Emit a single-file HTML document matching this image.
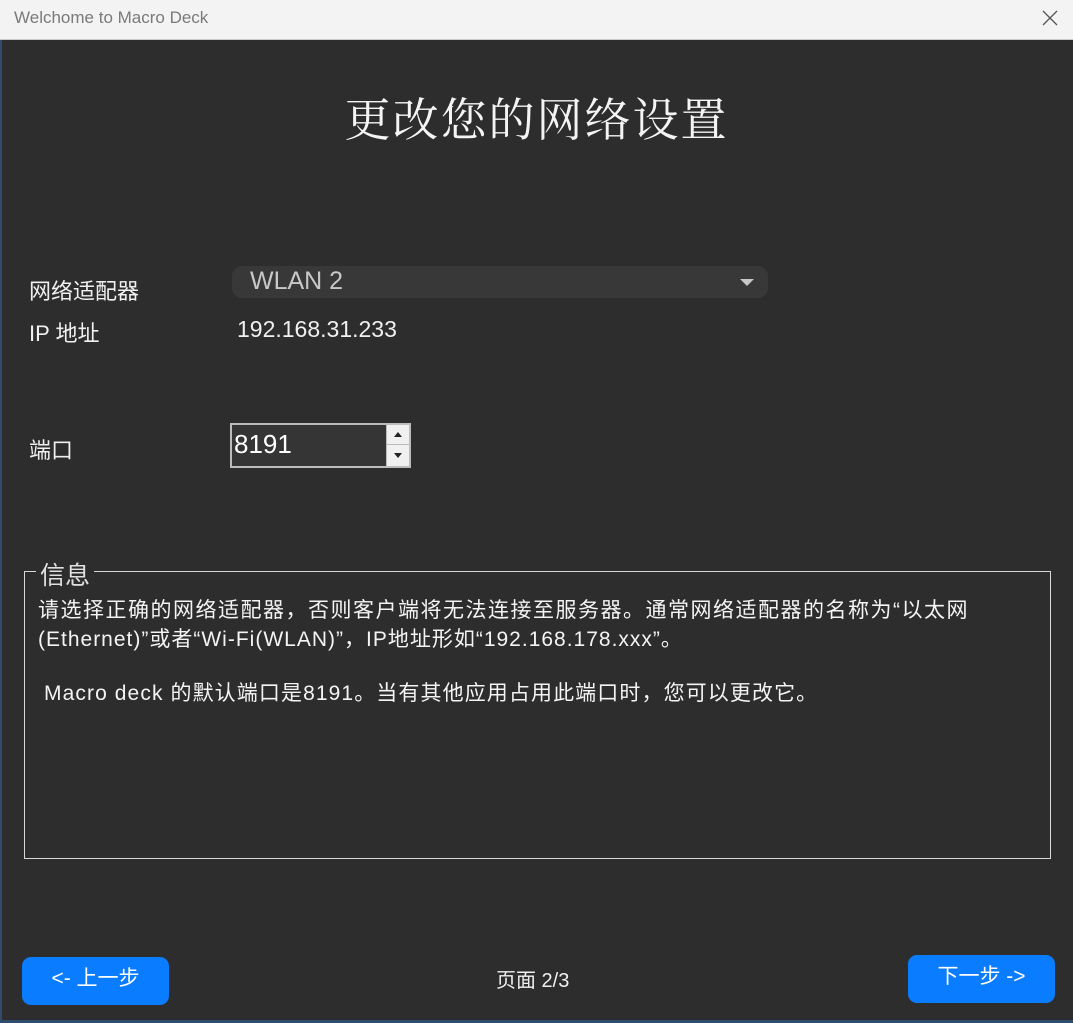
<!DOCTYPE html>
<html><head><meta charset="utf-8"><style>
*{margin:0;padding:0;box-sizing:border-box}
body{width:1073px;height:1023px;background:#2d2d2d;font-family:"Liberation Sans","Noto Sans CJK SC",sans-serif;color:#f0f0f0;position:relative;overflow:hidden}
.tb{position:absolute;left:0;top:0;width:1073px;height:40px;background:#f3f3f3;border-bottom:1px solid #ccc}
.tb span{position:absolute;left:14px;top:8px;font-size:17px;color:#7a7a7a}
.edge{position:absolute;left:0;top:40px;width:2px;height:983px;background:#2f4c6e}
.edgeb{position:absolute;left:0;top:1020px;width:1073px;height:3px;background:#2f4c6e}
.abs{position:absolute;white-space:nowrap}
.h{left:0;width:1073px;text-align:center;top:84px;font-size:46px;font-family:"Noto Serif CJK SC",serif;letter-spacing:2px;color:#f4f4f4}
.lbl{font-size:22px;color:#f0f0f0}
.combo{left:232px;top:266px;width:536px;height:32px;border-radius:10px;background:#383838}
.combo span{position:absolute;left:18px;top:1px;font-size:25px;color:#c8c8c8}
.arr{position:absolute;right:14px;top:13px;width:0;height:0;border-left:7px solid transparent;border-right:7px solid transparent;border-top:7px solid #c8c8c8}
.spin{left:230px;top:423px;width:181px;height:45px;border:2px solid #bcbcbc;background:#353535}
.spin span{position:absolute;left:2px;top:4px;font-size:26px;color:#fff}
.btns{position:absolute;right:0;top:0;width:23px;height:41px;background:#f0f0f0;border-left:1px solid #bbb}
.btns div{height:20px;border-bottom:1px solid #bbb;position:relative}
.fs{left:24px;top:571px;width:1027px;height:288px;border:1.5px solid #d8d8d8}
.leg{left:36px;top:556px;font-size:25px;background:#2d2d2d;padding:0 4px;color:#e0e0e0}
.p{left:38px;font-size:21px;letter-spacing:1.5px;color:#f4f4f4}
.btn{top:957px;width:147px;height:48px;background:#0a7cff;border-radius:9px;font-size:21px;color:#fff;text-align:center;line-height:44px}
</style></head><body>
<div class="tb"><span>Welchome to Macro Deck</span>
<svg style="position:absolute;right:14px;top:9px" width="18" height="18" viewBox="0 0 18 18"><path d="M2 2L16 16M16 2L2 16" stroke="#555" stroke-width="1.3"/></svg></div>
<div class="edge"></div><div class="edgeb"></div>
<div class="abs h">更改您的网络设置</div>
<div class="abs lbl" style="left:29px;top:274px">网络适配器</div>
<div class="abs combo"><span>WLAN 2</span><div class="arr"></div></div>
<div class="abs lbl" style="left:29px;top:316px">IP 地址</div>
<div class="abs" style="left:237px;top:316px;font-size:23px">192.168.31.233</div>
<div class="abs lbl" style="left:29px;top:433px">端口</div>
<div class="abs spin"><span>8191</span><div class="btns"><div><svg style="position:absolute;left:7px;top:7px" width="8" height="5"><path d="M0 5L4 0L8 5Z" fill="#222"/></svg></div><div style="border:none"><svg style="position:absolute;left:7px;top:8px" width="8" height="5"><path d="M0 0L4 5L8 0Z" fill="#222"/></svg></div></div></div>
<div class="abs fs"></div>
<div class="abs leg">信息</div>
<div class="abs p" style="top:594px">请选择正确的网络适配器，否则客户端将无法连接至服务器。通常网络适配器的名称为“以太网</div>
<div class="abs p" style="top:623px;letter-spacing:1px">(Ethernet)”或者“Wi-Fi(WLAN)”，IP地址形如“192.168.178.xxx”。</div>
<div class="abs p" style="top:677px;left:44px;letter-spacing:1.1px">Macro deck 的默认端口是8191。当有其他应用占用此端口时，您可以更改它。</div>
<div class="abs btn" style="left:22px">&lt;- 上一步</div>
<div class="abs" style="left:496px;top:964px;font-size:20px">页面 2/3</div>
<div class="abs btn" style="left:908px;top:955px">下一步 -&gt;</div>
</body></html>
